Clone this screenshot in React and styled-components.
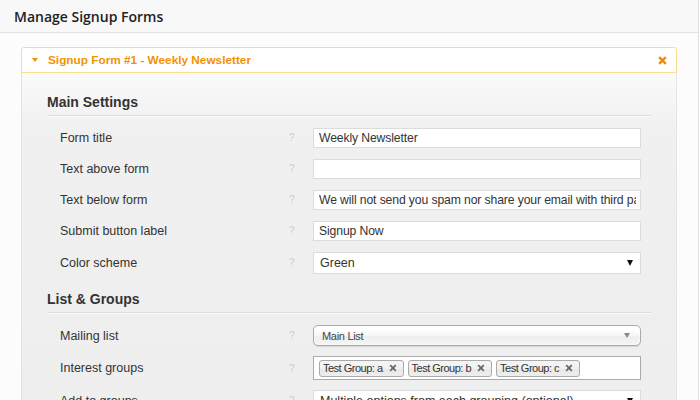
import React from "react";
import styled, { createGlobalStyle } from "styled-components";

const GlobalStyle = createGlobalStyle`
  html, body {
    margin: 0;
    padding: 0;
    background: #fcfcfc;
    font-family: "Liberation Sans", Arial, sans-serif;
    color: #333;
  }
`;

const Page = styled.div`
  width: 698px;
  height: 400px;
  border-right: 1px solid #e2e2e2;
  overflow: hidden;
`;

const PageHeader = styled.div`
  height: 32px;
  display: flex;
  align-items: center;
  padding-left: 14px;
  background: #f8f8f8;
  border-bottom: 1px solid #e2e2e2;
`;

const PageTitle = styled.h1`
  margin: 0;
  font-family: "Open Sans", sans-serif;
  font-weight: 600;
  font-size: 14px;
  color: #222;
`;

const Content = styled.div`
  padding: 14px 21px 0 21px;
`;

const Card = styled.div`
  display: flex;
  flex-direction: column;
`;

const CardHeader = styled.div`
  height: 24px;
  display: flex;
  align-items: center;
  padding: 0 9px 0 10px;
  background: #fff;
  border: 1px solid #f7dd8c;
  border-radius: 3px 3px 0 0;
`;

const Caret = styled.span`
  width: 0;
  height: 0;
  border-left: 3px solid transparent;
  border-right: 3px solid transparent;
  border-top: 4px solid #f29200;
  margin-right: 10px;
`;

const CardTitle = styled.span`
  flex: 1;
  font-weight: bold;
  font-size: 11.8px;
  color: #f29200;
`;

const CloseIcon = styled.svg`
  width: 9px;
  height: 9px;
  display: block;
`;

const CardBody = styled.div`
  padding: 20px 25px 20px 25px;
  border-left: 1px solid #e4e4e4;
  border-right: 1px solid #e4e4e4;
  background: linear-gradient(#fafafa 0px, #f0f0f0 60px, #eeeeee 100%);
  height: 360px;
`;

const SectionTitle = styled.h2`
  margin: ${(p) => (p.$first ? "0 0 6px 0" : "11px 0 7px 0")};
  padding-bottom: 4px;
  font-size: 14px;
  line-height: 18px;
  font-weight: bold;
  color: #333;
  border-bottom: 1px solid #dedede;
  box-shadow: 0 1px 0 #fafafa;
`;

const Row = styled.div`
  display: grid;
  grid-template-columns: 229px 24px 328px;
  align-items: center;
  height: ${(p) => p.$h || 31}px;
  padding-left: 13px;
`;

const Label = styled.label`
  font-size: 12.5px;
  color: #333;
`;

const Help = styled.span`
  font-size: 10px;
  color: #ccc;
`;

const TextInput = styled.input`
  box-sizing: border-box;
  width: 328px;
  height: 20px;
  margin: 0;
  padding: 0 4px 0 5px;
  border: 1px solid #dcdcdc;
  background: #fff;
  font-family: "Liberation Sans", Arial, sans-serif;
  font-size: 12.2px;
  letter-spacing: -0.12px;
  color: #333;
  outline: none;
`;

const PlainSelect = styled.div`
  box-sizing: border-box;
  height: ${(p) => p.$h || 22}px;
  display: flex;
  align-items: center;
  justify-content: space-between;
  padding: 0 7px 0 6px;
  border: 1px solid #dcdcdc;
  background: #fff;
  font-size: 12.5px;
  color: #333;
  white-space: nowrap;
  overflow: hidden;
`;

const DarkArrow = styled.span`
  width: 0;
  height: 0;
  flex: none;
  border-left: 3px solid transparent;
  border-right: 3px solid transparent;
  border-top: 6px solid #111;
`;

const ChosenSelect = styled.div`
  box-sizing: border-box;
  height: 21px;
  display: flex;
  align-items: center;
  justify-content: space-between;
  padding: 0 10px 0 8px;
  border: 1px solid #aaa;
  border-radius: 5px;
  background: linear-gradient(#fff 20%, #f6f6f6 50%, #eee 52%, #f4f4f4 100%);
  box-shadow: 0 0 3px #fff inset, 0 1px 1px rgba(0, 0, 0, 0.1);
  font-size: 11px;
  letter-spacing: -0.3px;
  color: #444;
`;

const GreyArrow = styled.span`
  width: 0;
  height: 0;
  border-left: 3px solid transparent;
  border-right: 3px solid transparent;
  border-top: 5px solid #888;
`;

const ChosenMulti = styled.div`
  box-sizing: border-box;
  height: 24px;
  display: flex;
  align-items: center;
  gap: 4px;
  padding: 0 5px;
  border: 1px solid #aaa;
  background: #fff;
`;

const Tag = styled.span`
  box-sizing: border-box;
  height: 17px;
  display: inline-flex;
  align-items: center;
  gap: 6px;
  padding: 0 6px 0 3px;
  border: 1px solid #aaa;
  border-radius: 3px;
  background: linear-gradient(#f4f4f4 20%, #f0f0f0 50%, #e8e8e8 52%, #eee 100%);
  font-size: 11px;
  letter-spacing: -0.5px;
  color: #333;
`;

const TagClose = styled.svg`
  width: 8px;
  height: 8px;
  display: block;
`;

const mainSettings = [
  { label: "Form title", value: "Weekly Newsletter" },
  { label: "Text above form", value: "" },
  {
    label: "Text below form",
    value: "We will not send you spam nor share your email with third parties.",
  },
  { label: "Submit button label", value: "Signup Now" },
];

const groups = ["Test Group: a", "Test Group: b", "Test Group: c"];

export default function App() {
  return (
    <>
      <GlobalStyle />
      <Page>
        <PageHeader>
          <PageTitle>Manage Signup Forms</PageTitle>
        </PageHeader>
        <Content>
          <Card>
            <CardHeader>
              <Caret />
              <CardTitle>Signup Form #1 - Weekly Newsletter</CardTitle>
              <CloseIcon viewBox="0 0 9 9">
                <path d="M1.2 1.2 L7.8 7.8 M7.8 1.2 L1.2 7.8" stroke="#f28a00" strokeWidth="2.4" />
              </CloseIcon>
            </CardHeader>
            <CardBody>
              <SectionTitle $first>Main Settings</SectionTitle>
              {mainSettings.map((f) => (
                <Row key={f.label}>
                  <Label>{f.label}</Label>
                  <Help>?</Help>
                  <TextInput defaultValue={f.value} readOnly />
                </Row>
              ))}
              <Row $h={33}>
                <Label>Color scheme</Label>
                <Help>?</Help>
                <PlainSelect>
                  Green
                  <DarkArrow />
                </PlainSelect>
              </Row>

              <SectionTitle>List &amp; Groups</SectionTitle>
              <Row>
                <Label>Mailing list</Label>
                <Help>?</Help>
                <ChosenSelect>
                  Main List
                  <GreyArrow />
                </ChosenSelect>
              </Row>
              <Row $h={34}>
                <Label>Interest groups</Label>
                <Help>?</Help>
                <ChosenMulti>
                  {groups.map((g) => (
                    <Tag key={g}>
                      {g}
                      <TagClose viewBox="0 0 8 8">
                        <path d="M1.2 1.2 L6.8 6.8 M6.8 1.2 L1.2 6.8" stroke="#666" strokeWidth="1.7" />
                      </TagClose>
                    </Tag>
                  ))}
                </ChosenMulti>
              </Row>
              <Row>
                <Label>Add to groups</Label>
                <Help>?</Help>
                <PlainSelect $h={21}>
                  Multiple options from each grouping (optional)
                  <DarkArrow />
                </PlainSelect>
              </Row>
            </CardBody>
          </Card>
        </Content>
      </Page>
    </>
  );
}
